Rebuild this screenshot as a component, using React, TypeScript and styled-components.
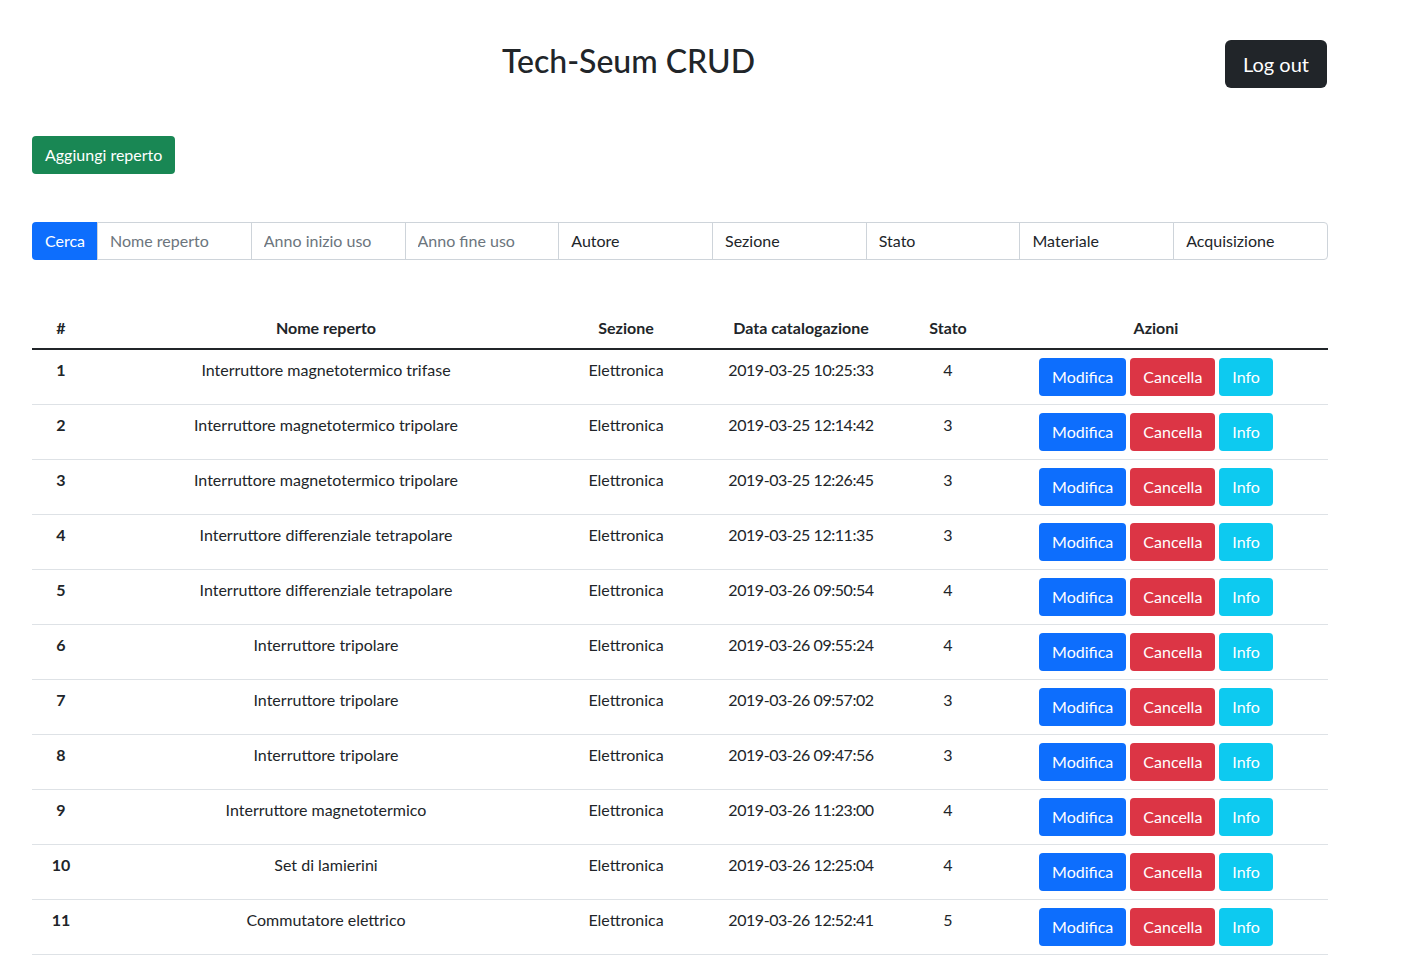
import React from 'react';
import styled, { createGlobalStyle } from 'styled-components';

const GlobalStyle = createGlobalStyle`
  * { box-sizing: border-box; }
  body {
    margin: 0;
    font-family: Lato, "Noto Sans", sans-serif;
    font-size: 16px;
    line-height: 1.5;
    color: #212529;
    background: #fff;
  }
`;

const Page = styled.div`
  width: 1296px;
  margin-left: 32px;
  padding-top: 40px;
`;

const Header = styled.header`
  display: flex;
  align-items: center;
`;

const Title = styled.h2`
  flex: 1;
  margin: 0 0 6px;
  text-align: center;
  font-size: 32px;
  font-weight: 500;
  line-height: 1.2;
`;

const Button = styled.button<{ $variant: 'primary' | 'danger' | 'info' | 'success' | 'dark'; $large?: boolean }>`
  font-family: inherit;
  font-size: ${({ $large }) => ($large ? '20px' : '16px')};
  line-height: 1.5;
  padding: ${({ $large }) => ($large ? '8px 17px' : '6px 12px')};
  border-radius: ${({ $large }) => ($large ? '6px' : '4px')};
  border: 1px solid transparent;
  color: #fff;
  cursor: pointer;
  white-space: nowrap;
  background: ${({ $variant }) =>
    ({
      primary: '#0d6efd',
      danger: '#dc3545',
      info: '#0dcaf0',
      success: '#198754',
      dark: '#212529',
    })[$variant]};
`;

const LogoutButton = styled(Button)`
  margin-right: 1px;
`;

const Toolbar = styled.div`
  margin-top: 48px;
`;

const SearchGroup = styled.form`
  margin-top: 48px;
  display: flex;
  height: 38px;
`;

const SearchButton = styled(Button)`
  border-radius: 4px 0 0 4px;
  flex: none;
`;

const SearchInput = styled.input<{ $filled?: boolean }>`
  flex: 1;
  min-width: 0;
  font-family: inherit;
  font-size: 16px;
  padding: 5px 12px 7px;
  border: 1px solid #ced4da;
  margin-left: -1px;
  color: #212529;
  background: #fff;
  &::placeholder {
    color: ${({ $filled }) => ($filled ? '#212529' : '#6c757d')};
  }
  &:last-child {
    border-radius: 0 4px 4px 0;
  }
`;

const Table = styled.table`
  margin-top: 48px;
  width: 100%;
  border-collapse: collapse;
  table-layout: fixed;
`;

const Th = styled.th`
  padding: 8px;
  text-align: center;
  font-weight: 700;
  border-bottom: 2px solid #212529;
`;

const Row = styled.tr`
  border-bottom: 1px solid #dee2e6;
`;

const Cell = styled.td<{ $bold?: boolean; $numeric?: boolean }>`
  padding: 8px;
  text-align: center;
  vertical-align: top;
  font-weight: ${({ $bold }) => ($bold ? 700 : 400)};
  letter-spacing: ${({ $numeric }) => ($numeric ? '-0.45px' : 'normal')};
`;

const Actions = styled.div`
  display: flex;
  justify-content: center;
  gap: 4px;
`;

const rows = [
  ['Interruttore magnetotermico trifase', '2019-03-25 10:25:33', 4],
  ['Interruttore magnetotermico tripolare', '2019-03-25 12:14:42', 3],
  ['Interruttore magnetotermico tripolare', '2019-03-25 12:26:45', 3],
  ['Interruttore differenziale tetrapolare', '2019-03-25 12:11:35', 3],
  ['Interruttore differenziale tetrapolare', '2019-03-26 09:50:54', 4],
  ['Interruttore tripolare', '2019-03-26 09:55:24', 4],
  ['Interruttore tripolare', '2019-03-26 09:57:02', 3],
  ['Interruttore tripolare', '2019-03-26 09:47:56', 3],
  ['Interruttore magnetotermico', '2019-03-26 11:23:00', 4],
  ['Set di lamierini', '2019-03-26 12:25:04', 4],
  ['Commutatore elettrico', '2019-03-26 12:52:41', 5],
] as const;

const filters = [
  { label: 'Nome reperto' },
  { label: 'Anno inizio uso' },
  { label: 'Anno fine uso' },
  { label: 'Autore', filled: true },
  { label: 'Sezione', filled: true },
  { label: 'Stato', filled: true },
  { label: 'Materiale', filled: true },
  { label: 'Acquisizione', filled: true },
];

const columns = [
  { label: '#', width: 58 },
  { label: 'Nome reperto', width: 472 },
  { label: 'Sezione', width: 128 },
  { label: 'Data catalogazione', width: 222 },
  { label: 'Stato', width: 72 },
  { label: 'Azioni', width: 344 },
];

const App: React.FC = () => {
  return (
    <>
      <GlobalStyle />
      <Page>
        <Header>
          <Title>Tech-Seum CRUD</Title>
          <LogoutButton $variant="dark" $large>Log out</LogoutButton>
        </Header>

        <Toolbar>
          <Button $variant="success">Aggiungi reperto</Button>
        </Toolbar>

        <SearchGroup onSubmit={(e) => e.preventDefault()}>
          <SearchButton $variant="primary" type="submit">Cerca</SearchButton>
          {filters.map((f) => (
            <SearchInput key={f.label} placeholder={f.label} $filled={f.filled} />
          ))}
        </SearchGroup>

        <Table>
          <colgroup>
            {columns.map((c) => (
              <col key={c.label} style={{ width: c.width }} />
            ))}
          </colgroup>
          <thead>
            <tr>
              {columns.map((c) => (
                <Th key={c.label}>{c.label}</Th>
              ))}
            </tr>
          </thead>
          <tbody>
            {rows.map(([name, date, stato], i) => (
              <Row key={i}>
                <Cell $bold>{i + 1}</Cell>
                <Cell>{name}</Cell>
                <Cell>Elettronica</Cell>
                <Cell $numeric>{date}</Cell>
                <Cell>{stato}</Cell>
                <Cell>
                  <Actions>
                    <Button $variant="primary">Modifica</Button>
                    <Button $variant="danger">Cancella</Button>
                    <Button $variant="info">Info</Button>
                  </Actions>
                </Cell>
              </Row>
            ))}
          </tbody>
        </Table>
      </Page>
    </>
  );
};

export default App;
